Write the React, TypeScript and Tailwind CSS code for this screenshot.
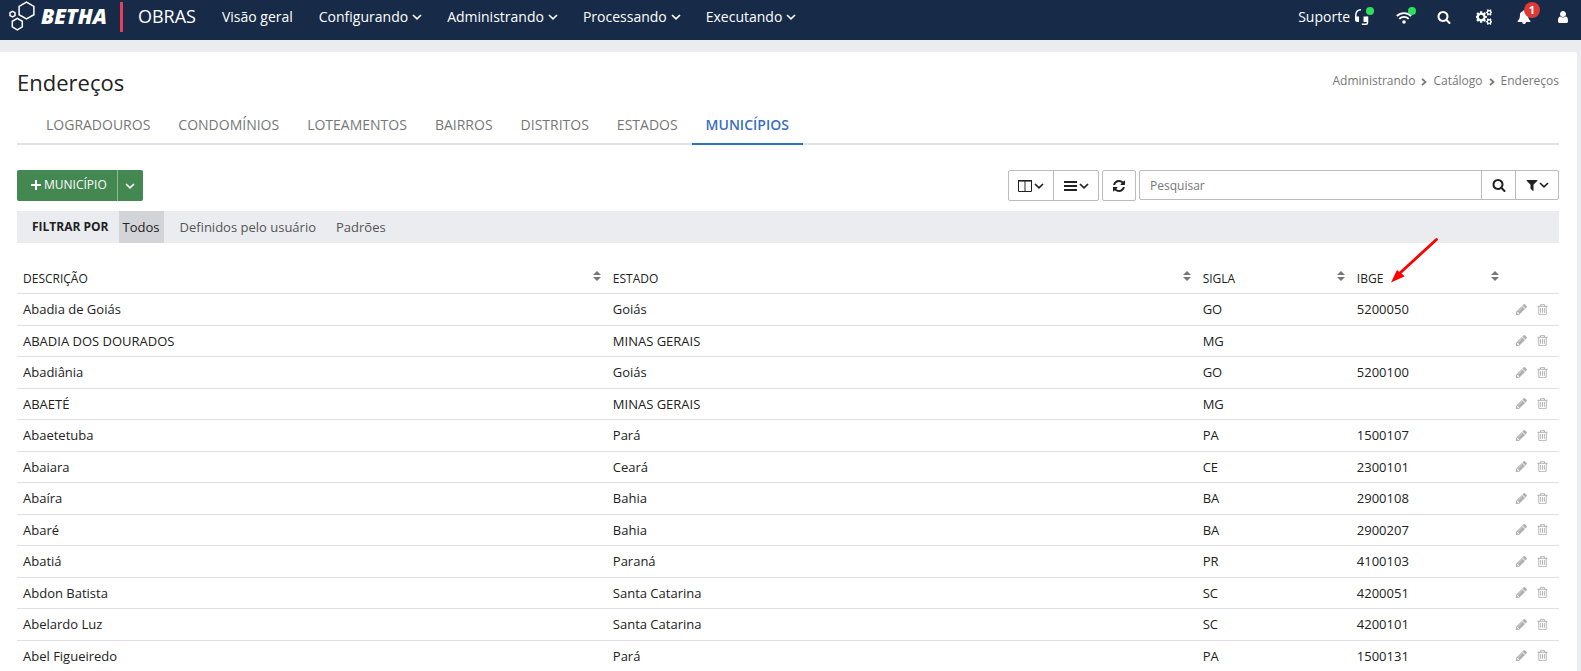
import type { ReactNode } from 'react'

type Municipio = { descricao: string; estado: string; sigla: string; ibge?: string }

const MENUS = ['Configurando', 'Administrando', 'Processando', 'Executando']
const TABS = ['LOGRADOUROS', 'CONDOMÍNIOS', 'LOTEAMENTOS', 'BAIRROS', 'DISTRITOS', 'ESTADOS', 'MUNICÍPIOS']

const MUNICIPIOS: Municipio[] = [
  { descricao: 'Abadia de Goiás', estado: 'Goiás', sigla: 'GO', ibge: '5200050' },
  { descricao: 'ABADIA DOS DOURADOS', estado: 'MINAS GERAIS', sigla: 'MG' },
  { descricao: 'Abadiânia', estado: 'Goiás', sigla: 'GO', ibge: '5200100' },
  { descricao: 'ABAETÉ', estado: 'MINAS GERAIS', sigla: 'MG' },
  { descricao: 'Abaetetuba', estado: 'Pará', sigla: 'PA', ibge: '1500107' },
  { descricao: 'Abaiara', estado: 'Ceará', sigla: 'CE', ibge: '2300101' },
  { descricao: 'Abaíra', estado: 'Bahia', sigla: 'BA', ibge: '2900108' },
  { descricao: 'Abaré', estado: 'Bahia', sigla: 'BA', ibge: '2900207' },
  { descricao: 'Abatiá', estado: 'Paraná', sigla: 'PR', ibge: '4100103' },
  { descricao: 'Abdon Batista', estado: 'Santa Catarina', sigla: 'SC', ibge: '4200051' },
  { descricao: 'Abelardo Luz', estado: 'Santa Catarina', sigla: 'SC', ibge: '4200101' },
  { descricao: 'Abel Figueiredo', estado: 'Pará', sigla: 'PA', ibge: '1500131' },
]

// Icons on a 1792 grid
const ICONS = {
  search:
    'M1216 832q0-185-131.5-316.5t-316.5-131.5-316.5 131.5-131.5 316.5 131.5 316.5 316.5 131.5 316.5-131.5 131.5-316.5zm512 832q0 52-38 90t-90 38q-54 0-90-38l-343-342q-179 124-399 124-143 0-273.5-55.5t-225-150-150-225-55.5-273.5 55.5-273.5 150-225 225-150 273.5-55.5 273.5 55.5 225 150 150 225 55.5 273.5q0 220-124 399l343 343q37 37 37 90z',
  cogs:
    'M832 896q0-106-75-181t-181-75-181 75-75 181 75 181 181 75 181-75 75-181zm768 512q0-52-38-90t-90-38-90 38-38 90q0 53 37.5 90.5t90.5 37.5 90.5-37.5 37.5-90.5zm0-1024q0-52-38-90t-90-38-90 38-38 90q0 53 37.5 90.5t90.5 37.5 90.5-37.5 37.5-90.5zm-384 421v185q0 10-7 19.5t-16 10.5l-155 24q-11 35-32 76 34 48 90 115 7 11 7 20 0 12-7 19-23 30-82.5 89.5t-78.5 59.5q-11 0-21-7l-115-90q-37 19-77 31-11 108-23 155-7 24-30 24h-186q-11 0-20-7.5t-10-17.5l-23-153q-34-10-75-31l-118 89q-7 7-20 7-11 0-21-8-144-133-144-160 0-9 7-19 10-14 41-53t47-61q-23-44-35-82l-152-24q-10-1-17-9.5t-7-19.5v-185q0-10 7-19.5t16-10.5l155-24q11-35 32-76-34-48-90-115-7-11-7-20 0-12 7-20 22-30 82-89t79-59q11 0 21 7l115 90q34-18 77-32 11-108 23-154 7-24 30-24h186q11 0 20 7.5t10 17.5l23 153q34 10 75 31l118-89q8-7 20-7 11 0 21 8 144 133 144 160 0 8-7 19-12 16-42 54t-45 60q23 48 34 82l152 23q10 2 17 10.5t7 19.5zm640 533v140q0 16-149 31-12 27-30 52 51 113 51 138 0 4-4 7-122 71-124 71-8 0-46-47t-52-68q-20 2-30 2t-30-2q-14 21-52 68t-46 47q-2 0-124-71-4-3-4-7 0-25 51-138-18-25-30-52-149-15-149-31v-140q0-16 149-31 13-29 30-52-51-113-51-138 0-4 4-7 4-2 35-20t59-34 30-16q8 0 46 46.5t52 67.5q20-2 30-2t30 2q51-71 92-112l6-2q4 0 124 70 4 3 4 7 0 25-51 138 17 23 30 52 149 15 149 31zm0-1024v140q0 16-149 31-12 27-30 52 51 113 51 138 0 4-4 7-122 71-124 71-8 0-46-47t-52-68q-20 2-30 2t-30-2q-14 21-52 68t-46 47q-2 0-124-71-4-3-4-7 0-25 51-138-18-25-30-52-149-15-149-31v-140q0-16 149-31 13-29 30-52-51-113-51-138 0-4 4-7 4-2 35-20t59-34 30-16q8 0 46 46.5t52 67.5q20-2 30-2t30 2q51-71 92-112l6-2q4 0 124 70 4 3 4 7 0 25-51 138 17 23 30 52 149 15 149 31z',
  bell:
    'M912 1696q0-16-16-16-59 0-101.5-42.5t-42.5-101.5q0-16-16-16t-16 16q0 73 51.5 124.5t124.5 51.5q16 0 16-16zm816-288q0 52-38 90t-90 38h-448q0 106-75 181t-181 75-181-75-75-181h-448q-52 0-90-38t-38-90q50-42 91-88t85-119.5 74.5-158.5 50-206 19.5-260q0-152 117-282.5t307-158.5q-8-19-8-39 0-40 28-68t68-28 68 28 28 68q0 20-8 39 190 28 307 158.5t117 282.5q0 139 19.5 260t50 206 74.5 158.5 85 119.5 91 88z',
  user:
    'M1536 1399q0 109-62.5 187t-150.5 78h-854q-88 0-150.5-78t-62.5-187q0-85 8.5-160.5t31.5-152 58.5-131 94-89 134.5-34.5q131 128 313 128t313-128q76 0 134.5 34.5t94 89 58.5 131 31.5 152 8.5 160.5zm-256-887q0 159-112.5 271.5t-271.5 112.5-271.5-112.5-112.5-271.5 112.5-271.5 271.5-112.5 271.5 112.5 112.5 271.5z',
  refresh:
    'M1639 1056q0 5-1 7-64 268-268 434.5t-478 166.5q-146 0-282.5-55t-243.5-157l-129 129q-19 19-45 19t-45-19-19-45v-448q0-26 19-45t45-19h448q26 0 45 19t19 45-19 45l-137 137q71 66 161 102t187 36q134 0 250-65t186-179q11-17 53-117 8-23 30-23h192q13 0 22.5 9.5t9.5 22.5zm25-800v448q0 26-19 45t-45 19h-448q-26 0-45-19t-19-45 19-45l138-138q-148-137-349-137-134 0-250 65t-186 179q-11 17-53 117-8 23-30 23h-199q-13 0-22.5-9.5t-9.5-22.5v-7q65-268 270-434.5t480-166.5q146 0 284 55.5t245 156.5l130-129q19-19 45-19t45 19 19 45z',
  filter:
    'M1595 295q17 41-14 70l-493 493v742q0 42-39 59-13 5-25 5-27 0-45-19l-256-256q-19-19-19-45v-486l-493-493q-31-29-14-70 17-39 59-39h1280q42 0 59 39z',
  pencil:
    'M491 1536l91-91-235-235-91 91v107h128v128h107zm523-928q0-22-22-22-10 0-17 7l-542 542q-7 7-7 17 0 22 22 22 10 0 17-7l542-542q7-7 7-17zm-54-192l416 416-832 832h-416v-416zm683 96q0 53-37 90l-166 166-416-416 166-165q36-38 90-38 53 0 91 38l235 234q37 39 37 91z',
  trash:
    'M704 736v576q0 14-9 23t-23 9h-64q-14 0-23-9t-9-23v-576q0-14 9-23t23-9h64q14 0 23 9t9 23zm256 0v576q0 14-9 23t-23 9h-64q-14 0-23-9t-9-23v-576q0-14 9-23t23-9h64q14 0 23 9t9 23zm256 0v576q0 14-9 23t-23 9h-64q-14 0-23-9t-9-23v-576q0-14 9-23t23-9h64q14 0 23 9t9 23zm128 724v-948h-896v948q0 22 7 40.5t14.5 27 10.5 8.5h832q3 0 10.5-8.5t14.5-27 7-40.5zm-672-1076h448l-48-117q-7-9-17-11h-317q-10 2-17 11zm928 32v64q0 14-9 23t-23 9h-96v948q0 83-47 143.5t-113 60.5h-832q-66 0-113-58.5t-47-141.5v-952h-96q-14 0-23-9t-9-23v-64q0-14 9-23t23-9h309l70-167q15-37 54-63t79-26h320q40 0 79 26t54 63l70 167h309q14 0 23 9t9 23z',
}

function Icon({ name, className = 'size-3.5' }: { name: keyof typeof ICONS; className?: string }) {
  return (
    <svg viewBox="0 0 1792 1792" fill="currentColor" aria-hidden="true" className={className}>
      <path d={ICONS[name]} />
    </svg>
  )
}

function Chevron({ className = 'h-1.5 w-2.5' }: { className?: string }) {
  return (
    <svg viewBox="0 0 10 6" fill="none" stroke="currentColor" strokeWidth="1.7" aria-hidden="true" className={className}>
      <path d="M1 1l4 3.8L9 1" />
    </svg>
  )
}

function CrumbArrow() {
  return (
    <svg viewBox="0 0 6 8" fill="none" stroke="currentColor" strokeWidth="1.8" aria-hidden="true" className="mx-px mt-0.5 h-2 w-1.5">
      <path d="M1 .8L4.500 4 1 7.200" />
    </svg>
  )
}

function Logo() {
  return (
    <svg viewBox="0 0 28 30" fill="none" stroke="white" strokeWidth="1.5" aria-hidden="true" className="h-[30px] w-7">
      <path d="M18.5 1.2l7.4 4.2v8.3l-7.4 4.2-7.4-4.2V5.4z" />
      <path d="M9.3 17.4l5 2.9v5.6l-5 2.9-5-2.9v-5.6z" />
      <path d="M4.5 10.3l2.500 1.4v2.9l-2.500 1.4L2 14.6v-2.9z" />
    </svg>
  )
}

function TopIcon({ label, children }: { label: string; children: ReactNode }) {
  return (
    <button type="button" aria-label={label} className="relative flex w-4 items-center justify-center last:w-3.5">
      {children}
    </button>
  )
}

function OnlineDot() {
  return <span className="absolute -top-0.5 -right-1 size-2 rounded-full bg-[#2fdf5b]" />
}

function Header() {
  return (
    <header className="flex h-10 items-center bg-[#172b48] pr-[11px] pl-2 text-white">
      <a href="#inicio" className="flex h-full items-center gap-[5px] pb-2">
        <Logo />
        <span className="text-[21px] leading-6 font-extrabold italic">BETHA</span>
      </a>
      <span className="mb-1.5 ml-[13px] h-[30px] w-[3px] bg-[#e63f5c]" />
      <a href="#obras" className="ml-[15px] pb-2 text-lg leading-6">
        OBRAS
      </a>
      <nav className="ml-[26px] flex items-center gap-[25px] pb-1.5 text-sm">
        <a href="#visao-geral" className="mr-px">
          Visão geral
        </a>
        {MENUS.map((menu) => (
          <button key={menu} type="button" className="flex items-center gap-1">
            {menu}
            <Chevron />
          </button>
        ))}
      </nav>
      <div className="ml-auto flex items-center gap-6 pb-1.5 text-sm">
        <button type="button" className="flex items-center gap-1">
          Suporte
          <span className="relative mr-0.5">
            <svg viewBox="0 0 16 16" fill="currentColor" aria-hidden="true" className="size-4">
              <path d="M1.800 9V6.500Q1.800 1 7 .8M13.500 7.500v6.200q0 1.500-1.500 1.500H7.800" fill="none" stroke="currentColor" strokeWidth="1.500" />
              <path d="M1 7.500h4V13H3.200Q1 13 1 10.800zM9.500 7.500h4V13h-4z" />
            </svg>
            <OnlineDot />
          </span>
        </button>
        <TopIcon label="Conexão">
          <svg viewBox="0 0 16 16" fill="none" stroke="currentColor" strokeWidth="1.8" aria-hidden="true" className="size-4">
            <path d="M.8 7a10.400 10.400 0 0 1 14.400 0M3.300 9.800a6.700 6.700 0 0 1 9.400 0" />
            <circle cx="8" cy="13" r="1.8" fill="currentColor" stroke="none" />
          </svg>
          <OnlineDot />
        </TopIcon>
        <TopIcon label="Pesquisar no sistema">
          <Icon name="search" />
        </TopIcon>
        <TopIcon label="Configurações">
          <Icon name="cogs" className="size-4" />
        </TopIcon>
        <TopIcon label="Notificações">
          <Icon name="bell" />
          <span className="absolute -top-2 -right-2 flex size-4 items-center justify-center rounded-full bg-[#dc3a36] text-[11px] leading-4 font-bold">
            1
          </span>
        </TopIcon>
        <TopIcon label="Usuário">
          <Icon name="user" />
        </TopIcon>
      </div>
    </header>
  )
}

function Breadcrumb() {
  return (
    <nav aria-label="Trilha" className="flex items-center gap-[5px] text-xs text-[#777]">
      <a href="#administrando">Administrando</a>
      <CrumbArrow />
      <a href="#catalogo">Catálogo</a>
      <CrumbArrow />
      <a href="#enderecos">Endereços</a>
    </nav>
  )
}

function Tabs() {
  return (
    <nav className="flex border-b-2 border-[#e1e2e8] pl-[15px] text-sm text-[#777]">
      {TABS.map((tab) => (
        <a
          key={tab}
          href={`#${tab.toLowerCase()}`}
          className={
            tab === 'MUNICÍPIOS'
              ? '-mb-0.5 border-b-2 border-[#2b74c4] px-3.5 pt-2 pb-2 font-semibold text-[#3a6fc0]'
              : 'px-3.5 pt-2 pb-2'
          }
        >
          {tab}
        </a>
      ))}
    </nav>
  )
}

function Toolbar() {
  return (
    <div className="flex items-start justify-between">
      <div className="flex h-[31px] overflow-hidden rounded-xs bg-[#438751] text-xs text-white">
        <button type="button" className="flex items-center gap-[3px] pr-2.5 pb-0.5 pl-3.5 font-medium">
          <svg viewBox="0 0 10 10" stroke="currentColor" strokeWidth="2" aria-hidden="true" className="size-2.5">
            <path d="M5 0v10M0 5h10" />
          </svg>
          MUNICÍPIO
        </button>
        <button type="button" aria-label="Mais opções" className="border-l border-[#8fbb98] pr-2 pl-[7px]">
          <Chevron />
        </button>
      </div>

      <div className="flex items-start gap-[3px] text-[#222]">
        <div className="flex h-[31px] rounded-xs border border-[#bbb]">
          <button type="button" aria-label="Colunas" className="flex w-11 items-center justify-center gap-0.5">
            <svg viewBox="0 0 14 12" fill="none" stroke="currentColor" aria-hidden="true" className="h-3 w-3.5">
              <path d="M.5.5h13v11H.5zM7 .5v11" />
              <path d="M0 .8h14" strokeWidth="1.6" />
            </svg>
            <Chevron />
          </button>
          <button type="button" aria-label="Linhas" className="flex w-[45px] items-center justify-center gap-0.5 border-l border-[#bbb]">
            <svg viewBox="0 0 13 12" stroke="currentColor" strokeWidth="2" aria-hidden="true" className="h-3 w-[13px]">
              <path d="M0 2h13M0 6h13M0 10h13" />
            </svg>
            <Chevron />
          </button>
        </div>
        <button type="button" aria-label="Atualizar" className="flex h-[31px] w-[34px] items-center justify-center rounded-xs border border-[#bbb]">
          <Icon name="refresh" />
        </button>
        <div className="flex h-[30px] rounded-xs border border-[#bbb]">
          <input
            type="text"
            aria-label="Pesquisar"
            placeholder="Pesquisar"
            className="w-[341px] px-2.5 pt-0.5 text-xs outline-none placeholder:text-[#777]"
          />
          <button type="button" aria-label="Buscar" className="flex w-[34px] items-center justify-center border-l border-[#bbb]">
            <Icon name="search" />
          </button>
          <button type="button" aria-label="Filtros" className="flex w-[43px] items-center justify-center border-l border-[#bbb]">
            <Icon name="filter" />
            <Chevron />
          </button>
        </div>
      </div>
    </div>
  )
}

function FilterBar() {
  return (
    <div className="mt-2.5 flex h-8 items-stretch bg-[#ebecf0] pl-[15px] text-[13px] text-[#555]">
      <strong className="mr-2.5 pt-1.5 text-xs leading-5 text-[#222]">FILTRAR POR</strong>
      <button type="button" className="bg-[#d3d4d8] px-1 pt-0.5 text-[#222]">
        Todos
      </button>
      <button type="button" className="ml-3 px-1 pt-0.5">
        Definidos pelo usuário
      </button>
      <button type="button" className="ml-3 px-1 pt-0.5">
        Padrões
      </button>
    </div>
  )
}

function SortIcon() {
  return (
    <svg viewBox="0 0 8 10" fill="#777" aria-hidden="true" className="mb-1.5 h-2.5 w-2">
      <path d="M4 0l4 4H0zM4 10L0 6h8z" />
    </svg>
  )
}

function Th({ className, children }: { className?: string; children: string }) {
  return (
    <th className={className}>
      <button type="button" className="relative flex w-full items-center justify-between px-1.5 pt-0.5 font-medium">
        {children}
        <SortIcon />
        {children === 'IBGE' && (
          <svg viewBox="0 0 48 46" aria-hidden="true" className="absolute bottom-1 left-10 h-[46px] w-12">
            <path d="M45.500 2.500L9 36" stroke="red" strokeWidth="2.8" strokeLinecap="round" />
            <path d="M0 45.500l6-12.500 7.800 6.200z" fill="red" />
          </svg>
        )}
      </button>
    </th>
  )
}

function Grid() {
  return (
    <table className="mt-5 w-full table-fixed border-collapse text-left text-[13px] leading-5 text-[#222]">
      <thead className="text-xs">
        <tr className="h-[30px] border-b border-[#dfe0e6]">
          <Th>DESCRIÇÃO</Th>
          <Th>ESTADO</Th>
          <Th className="w-1/10">SIGLA</Th>
          <Th className="w-1/10">IBGE</Th>
          <th className="w-[54px]" />
        </tr>
      </thead>
      <tbody>
        {MUNICIPIOS.map((m) => (
          <tr key={m.descricao} className="border-b border-[#dfe0e6] odd:h-8 even:h-[31px]">
            <td className="px-1.5">{m.descricao}</td>
            <td className="px-1.5">{m.estado}</td>
            <td className="px-1.5">{m.sigla}</td>
            <td className="px-1.5">{m.ibge}</td>
            <td>
              <div className="flex justify-end gap-2 pr-2.5 text-[#b0b0b0]">
                <button type="button" aria-label={`Editar ${m.descricao}`}>
                  <Icon name="pencil" className="size-[13px]" />
                </button>
                <button type="button" aria-label={`Excluir ${m.descricao}`}>
                  <Icon name="trash" className="size-[13px]" />
                </button>
              </div>
            </td>
          </tr>
        ))}
      </tbody>
    </table>
  )
}

export default function App() {
  return (
    <div className="h-screen overflow-hidden bg-[#ebecf0] font-['Open_Sans',sans-serif]">
      <Header />
      <main className="mt-3 mr-1 min-h-screen rounded-tr-xs bg-white pt-3.5 pr-[18px] pl-[17px]">
        <div className="mb-[9px] flex items-start justify-between">
          <h1 className="text-[22px] leading-8 text-[#222]">Endereços</h1>
          <div className="pt-[7px]">
            <Breadcrumb />
          </div>
        </div>
        <Tabs />
        <div className="pt-[25px]">
          <Toolbar />
          <FilterBar />
          <Grid />
        </div>
      </main>
    </div>
  )
}
